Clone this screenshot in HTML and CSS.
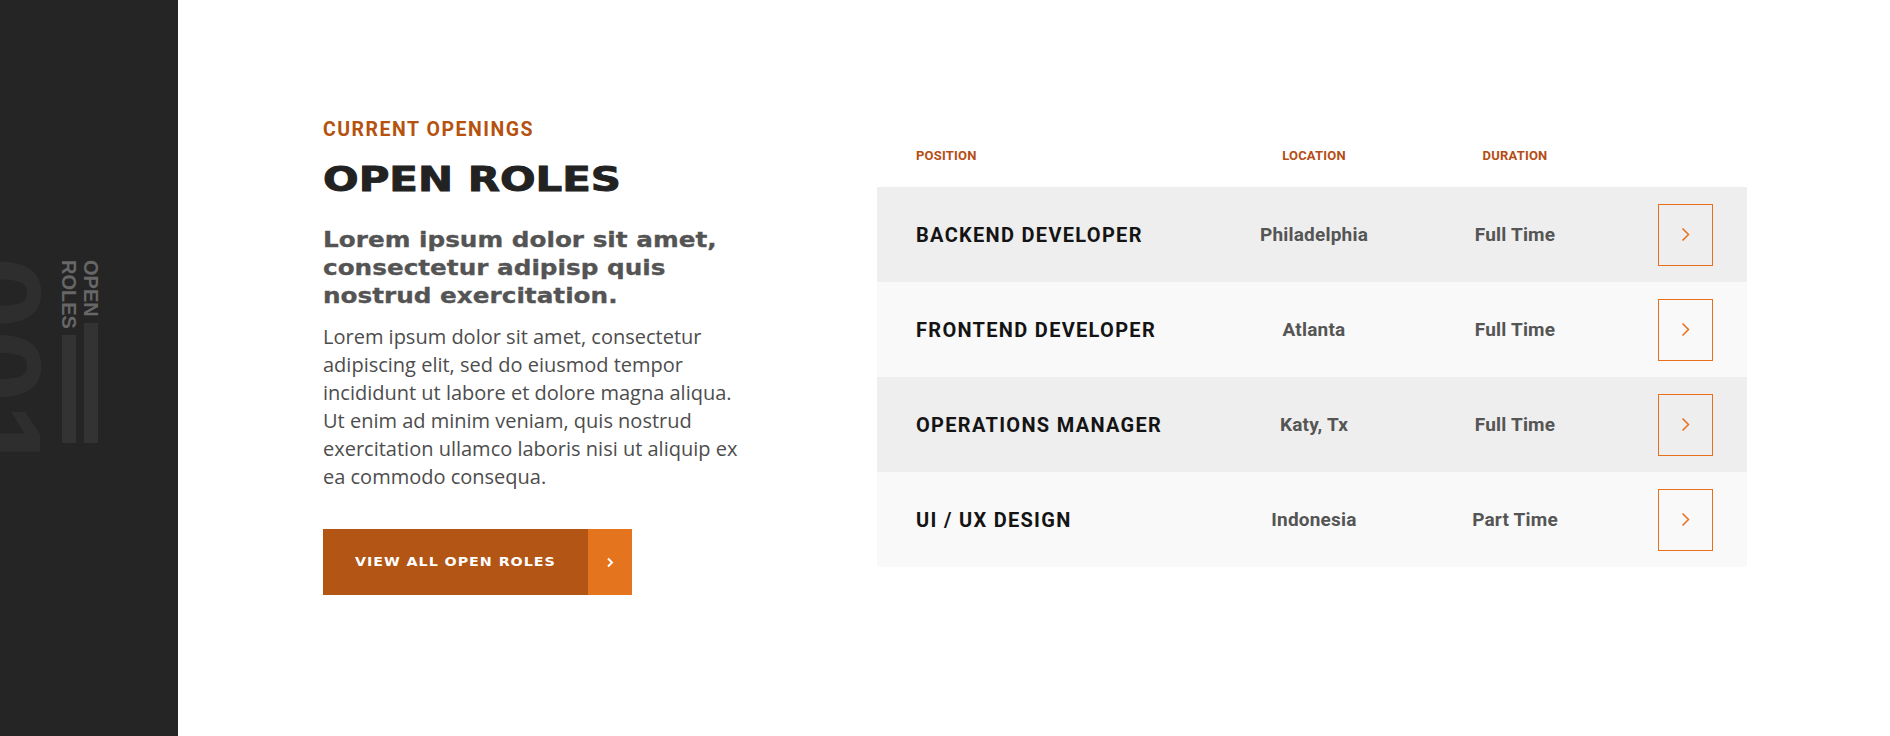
FILE: index.html
```html
<!DOCTYPE html>
<html lang="en">
<head>
<meta charset="utf-8">
<title>Open Roles</title>
<link rel="stylesheet" href="styles.css">
</head>
<body>
<div class="page">
  <aside class="sidebar">
    <div class="big-num">001</div>
    <div class="label-group">
      <div class="label-col"><span class="label-text">ROLES</span><span class="label-bar"></span></div>
      <div class="label-col"><span class="label-text">OPEN</span><span class="label-bar"></span></div>
    </div>
  </aside>
  <main class="main">
    <section class="intro">
      <p class="eyebrow">CURRENT OPENINGS</p>
      <h2 class="title"><span class="title-text">OPEN ROLES</span></h2>
      <p class="lead">Lorem ipsum dolor sit amet, consectetur adipisp quis nostrud exercitation.</p>
      <p class="body-text">Lorem ipsum dolor sit amet, consectetur adipiscing elit, sed do eiusmod tempor incididunt ut labore et dolore magna aliqua. Ut enim ad minim veniam, quis nostrud exercitation ullamco laboris nisi ut aliquip ex ea commodo consequa.</p>
      <a class="btn" href="#">
        <span class="btn-label"><span class="btn-text">VIEW ALL OPEN ROLES</span></span>
        <span class="btn-arrow"><svg width="8" height="11" viewBox="0 0 8 11"><polyline points="2,1.5 6,5.5 2,9.5" fill="none" stroke="#fff" stroke-width="2"/></svg></span>
      </a>
    </section>
    <section class="roles">
      <div class="roles-head">
        <span class="col-pos">POSITION</span>
        <span class="col-loc">LOCATION</span>
        <span class="col-dur">DURATION</span>
        <span class="col-act"></span>
      </div>
      <div class="role role-dark">
        <span class="col-pos">BACKEND DEVELOPER</span>
        <span class="col-loc">Philadelphia</span>
        <span class="col-dur">Full Time</span>
        <a class="col-act role-btn" href="#"><svg width="9" height="15" viewBox="0 0 9 15"><polyline points="1.5,1.5 7.5,7.5 1.5,13.5" fill="none" stroke="#e8701c" stroke-width="1.5"/></svg></a>
      </div>
      <div class="role role-light">
        <span class="col-pos">FRONTEND DEVELOPER</span>
        <span class="col-loc">Atlanta</span>
        <span class="col-dur">Full Time</span>
        <a class="col-act role-btn" href="#"><svg width="9" height="15" viewBox="0 0 9 15"><polyline points="1.5,1.5 7.5,7.5 1.5,13.5" fill="none" stroke="#e8701c" stroke-width="1.5"/></svg></a>
      </div>
      <div class="role role-dark">
        <span class="col-pos">OPERATIONS MANAGER</span>
        <span class="col-loc">Katy, Tx</span>
        <span class="col-dur">Full Time</span>
        <a class="col-act role-btn" href="#"><svg width="9" height="15" viewBox="0 0 9 15"><polyline points="1.5,1.5 7.5,7.5 1.5,13.5" fill="none" stroke="#e8701c" stroke-width="1.5"/></svg></a>
      </div>
      <div class="role role-light">
        <span class="col-pos">UI / UX DESIGN</span>
        <span class="col-loc">Indonesia</span>
        <span class="col-dur">Part Time</span>
        <a class="col-act role-btn" href="#"><svg width="9" height="15" viewBox="0 0 9 15"><polyline points="1.5,1.5 7.5,7.5 1.5,13.5" fill="none" stroke="#e8701c" stroke-width="1.5"/></svg></a>
      </div>
    </section>
  </main>
</div>
</body>
</html>
```
FILE: styles.css
```css
* { box-sizing: border-box; }
html, body { margin: 0; padding: 0; }
body { background: #fff; font-family: "Open Sans", sans-serif; }

.page { display: flex; width: 1890px; height: 736px; overflow: hidden; }

.sidebar {
  position: relative;
  flex: 0 0 178px;
  height: 736px;
  background: #252525;
  overflow: hidden;
  padding: 260px 0 0 62px;
}
.big-num {
  position: absolute;
  left: -72px;
  top: 256px;
  width: 132px;
  writing-mode: vertical-rl;
  font-family: "Liberation Sans", Arial, sans-serif;
  font-weight: 700;
  font-size: 132px;
  line-height: 132px;
  color: #2e2e2e;
}
.label-group { position: relative; display: flex; gap: 8px; height: 183px; }
.label-col { display: flex; flex-direction: column; align-items: center; width: 14px; gap: 6px; }
.label-text {
  writing-mode: vertical-rl;
  font-family: "Liberation Sans", Arial, sans-serif;
  font-weight: 700;
  font-size: 20px;
  line-height: 14px;
  color: #676767;
}
.label-bar { flex: 1; width: 14px; background: #333333; }

.main {
  flex: 1;
  display: flex;
  align-items: flex-start;
  gap: 132px;
  padding: 118px 0 0 145px;
}

.intro { width: 422px; flex: 0 0 422px; }
.eyebrow {
  margin: 0;
  font-family: Roboto, sans-serif;
  font-weight: 700;
  font-size: 19.5px;
  line-height: 24px;
  letter-spacing: 1.5px;
  color: #b5520f;
}
.title { margin: 18px 0 0; font-size: 33px; line-height: 40px; font-weight: 700; font-family: "DejaVu Sans", sans-serif; }
.title-text {
  display: inline-block;
  transform: scaleX(1.27);
  transform-origin: left center;
  color: #222;
  -webkit-text-stroke: 0.9px #222;
}
.lead {
  margin: 26px 0 0;
  width: 360px;
  transform: scaleX(1.205);
  transform-origin: left top;
  font-family: "DejaVu Sans", sans-serif;
  font-weight: 700;
  font-size: 20.5px;
  line-height: 28px;
  color: #545454;
  -webkit-text-stroke: 0.3px #545454;
}
.body-text {
  margin: 13px 0 0;
  font-family: "Open Sans", sans-serif;
  font-size: 20px;
  line-height: 28px;
  color: #4d4d4d;
}
.btn { display: flex; width: 309px; height: 66px; margin-top: 38px; text-decoration: none; }
.btn-label {
  flex: 0 0 265px;
  display: flex; align-items: center; justify-content: center;
  background: #b25515;
}
.btn-text {
  display: inline-block;
  transform: scaleX(1.19);
  font-family: "DejaVu Sans", sans-serif;
  font-weight: 700;
  font-size: 12px;
  letter-spacing: 0.8px;
  color: #fff;
}
.btn-arrow { flex: 1; display: flex; align-items: center; justify-content: center; background: #e5741f; }

.roles { width: 870px; flex: 0 0 870px; margin-top: 30px; font-family: Roboto, sans-serif; }
.roles-head, .role {
  display: grid;
  grid-template-columns: 318px 160px 201px 118px;
  align-items: center;
  padding: 0 34px 0 39px;
}
.roles-head {
  font-weight: 700;
  font-size: 13px;
  line-height: 16px;
  letter-spacing: 0.2px;
  color: #b54d14;
  margin-bottom: 23px;
}
.col-loc { text-align: center; }
.col-dur { text-align: center; padding-left: 41px; }
.col-act { justify-self: end; }
.role { height: 95px; }
.role-dark { background: #eeeeee; }
.role-light { background: #f9f9f9; }
.role .col-pos { font-weight: 700; font-size: 20px; letter-spacing: 1.3px; color: #141414; white-space: nowrap; }
.role .col-loc, .role .col-dur { font-weight: 700; font-size: 19px; letter-spacing: 0.2px; color: #555; }
.role-btn {
  width: 55px; height: 62px;
  border: 1.5px solid #e8701c;
  display: flex; align-items: center; justify-content: center;
}
```
